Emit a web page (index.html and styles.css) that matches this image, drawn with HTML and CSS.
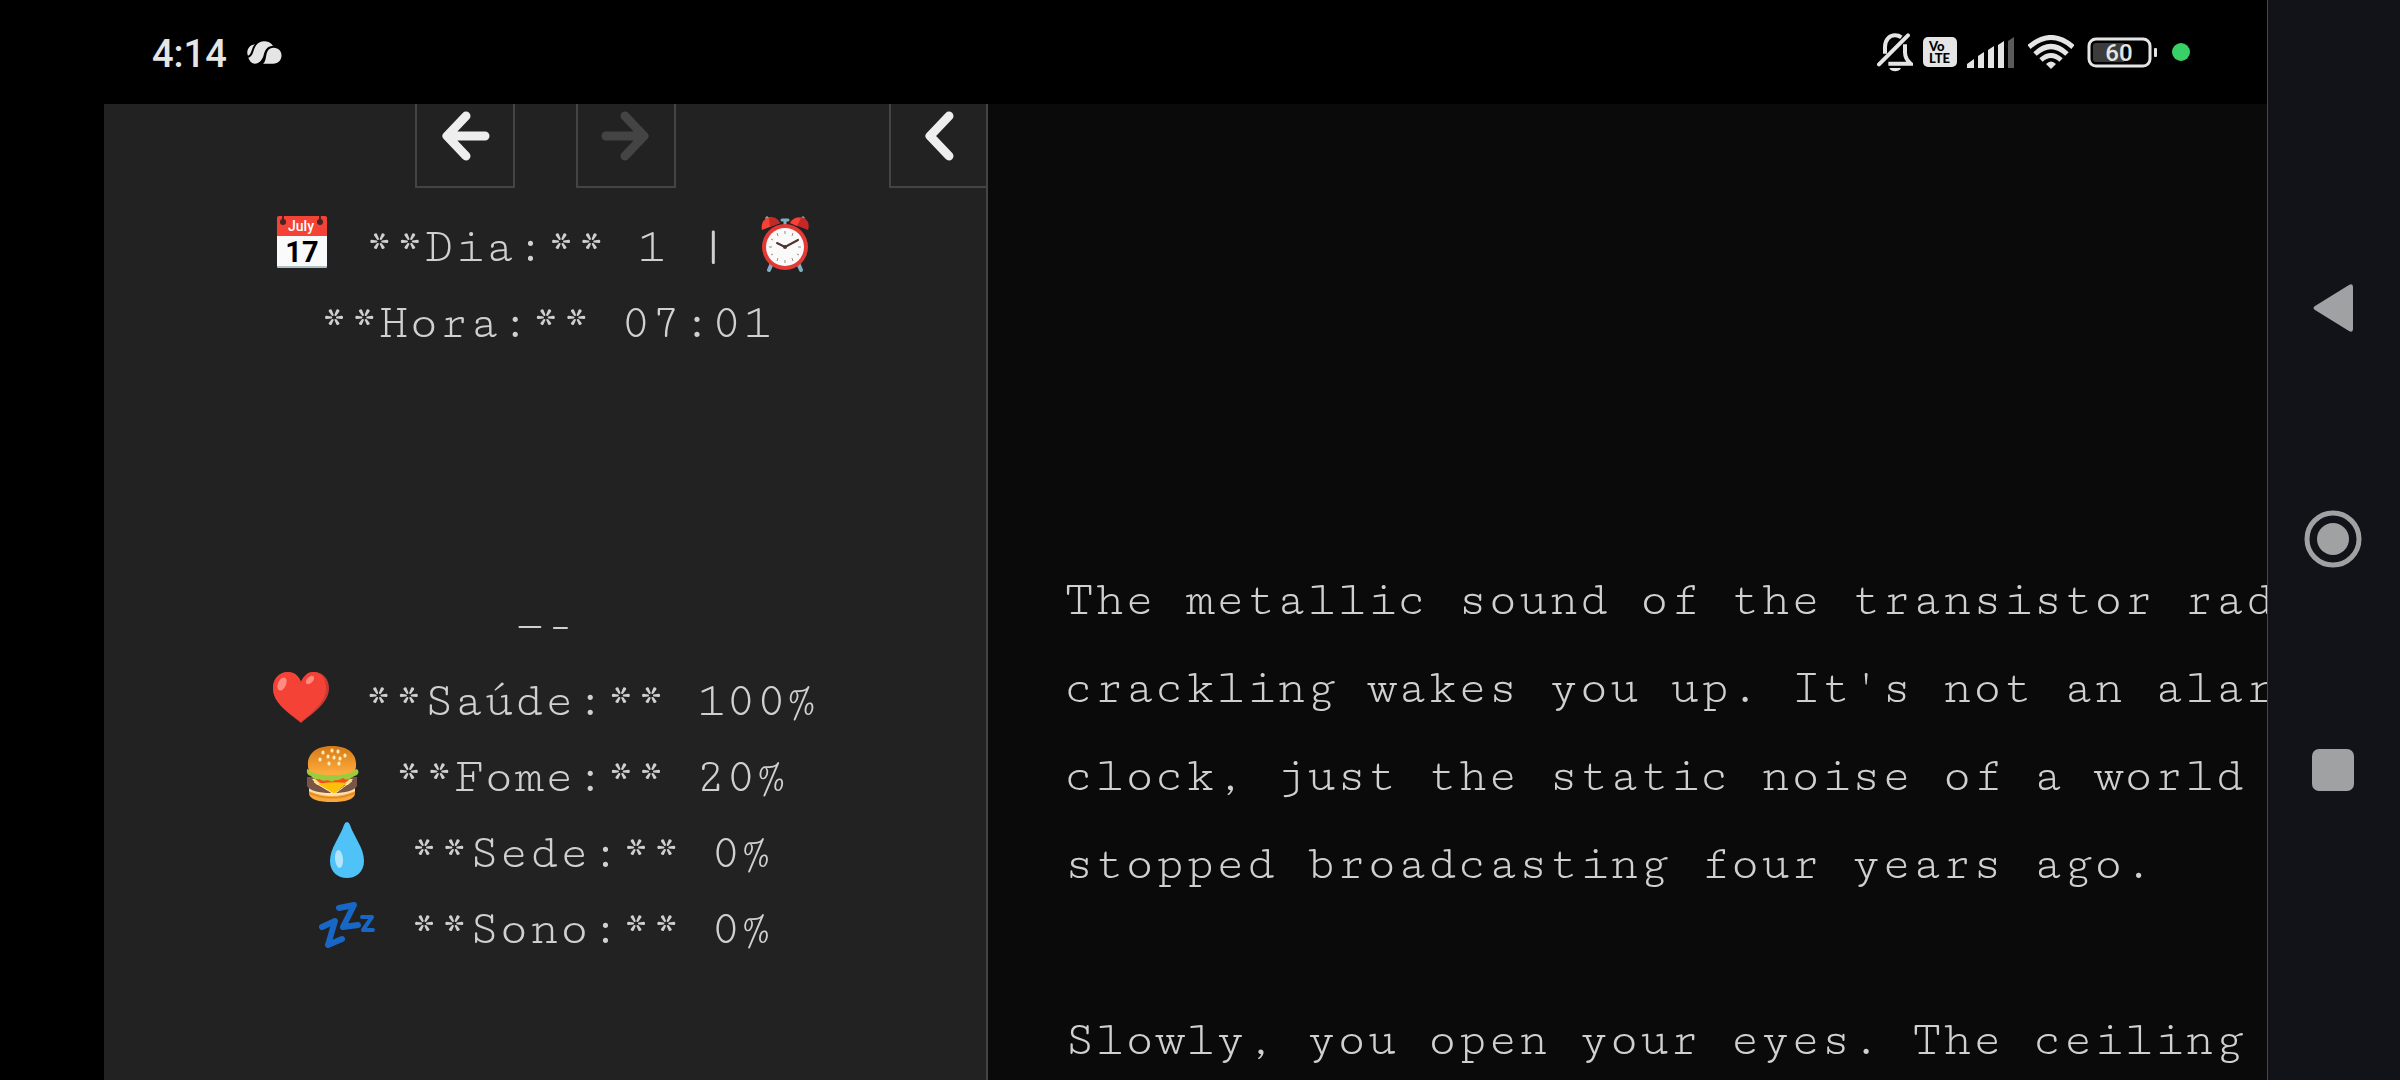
FILE: index.html
```html
<!DOCTYPE html>
<html lang="en">
    <head>
        <meta charset="utf-8">
        <title>Day 1</title>
        <link rel="stylesheet" href="styles.css">
    </head>
    <body>
        <div id="device">
            <header id="status-bar">
                <div class="status-group">
                    <span class="clock">4:14</span>
                    <svg class="cloud" width="35" height="23" viewBox="0 0 105 69" fill="#e5e5e5">
                        <path d="M24 10C8 12 0 24 1 38l2 6C14 42 12 22 24 10z"/>
                        <path d="M4 50C20 46 18 24 28 12 38-3 66-4 78 14 58 16 54 28 50 42 46 58 36 68 24 68 14 67 7 60 4 50z"/>
                        <path d="M48 68c10-6 8-28 14-38 8-14 28-12 36-2 12 14 4 40-20 40z"/>
                    </svg>
                </div>
                <div class="status-group status-icons">
                    <svg width="36" height="39" viewBox="0 0 108 117" fill="none" stroke="#e5e5e5" stroke-width="12">
                        <path d="M24 62V42C24 20 38 7 54 7c8 0 14 2 19 6M84 34v24c0 14 5 24 17 34H34"/>
                        <path d="M6 94L93 7" stroke-linecap="round"/>
                        <path d="M37 105h35c-5 13-30 13-35 0z" fill="#e5e5e5" stroke="none"/>
                    </svg>
                    <svg width="34" height="30" viewBox="0 0 34 30">
                        <rect width="34" height="30" rx="5" fill="#e5e5e5"/>
                        <text class="volte" x="6" y="14">Vo</text>
                        <text class="volte" x="6" y="26">LTE</text>
                    </svg>
                    <svg width="48" height="31" viewBox="0 0 48 31" fill="#e5e5e5">
                        <path d="M0 31v-4l7-5v9zM11 31V19l6-4v16zM21 31V13l6-4v22zM31 31V8l6-4v27z"/>
                        <path d="M41 31V4l6-4v31z" fill="#5b5b5b"/>
                    </svg>
                    <svg class="wifi" width="46" height="34" viewBox="0 0 46 34" fill="none" stroke="#e5e5e5" stroke-width="5">
                        <path d="M1 12Q23-7 45 12M7 19Q23 4 39 19M13 25q10-9 20 0"/>
                        <path d="M18 29q5-5 10 0l-5 5z" fill="#e5e5e5" stroke="none"/>
                    </svg>
                    <svg width="71" height="31" viewBox="0 0 71 31">
                        <rect x="2" y="2" width="61" height="27" rx="7" fill="none" stroke="#e5e5e5" stroke-width="3"/>
                        <path d="M9 6h28v19H9q-3 0-3-3V9q0-3 3-3z" fill="#3c3c3c"/>
                        <rect x="67" y="11" width="3" height="9" rx="1" fill="#e5e5e5"/>
                        <text class="battery" x="32" y="24">60</text>
                    </svg>
                    <span class="dot"></span>
                </div>
            </header>

            <div id="game">
                <aside id="sidebar">
                    <div id="history">
                        <div class="history-buttons">
                            <button class="tool" aria-label="Back">
                                <svg width="50" height="50" viewBox="0 0 50 50"><path d="M26 5L7 25l19 20M7 25h38"/></svg>
                            </button>
                            <button class="tool" aria-label="Forward" disabled>
                                <svg width="50" height="50" viewBox="0 0 50 50"><path d="M24 5l19 20-19 20M43 25H5"/></svg>
                            </button>
                        </div>
                        <button class="tool toggle" aria-label="Hide sidebar">
                            <svg width="50" height="50" viewBox="0 0 50 50"><path d="M35 5L16 25l19 20"/></svg>
                        </button>
                    </div>

                    <div id="stats">
                        <p>
                            <svg class="emoji" viewBox="0 0 56 56">
                                <rect x="3" y="1" width="50" height="51" rx="2" fill="#fafafa"/>
                                <path d="M5 0h46q2 0 2 2v18H3V2q0-2 2-2z" fill="#f44336"/>
                                <path d="M3 50v1q0 1 2 1h46q2 0 2-1v-1z" fill="#b0bec5"/>
                                <path d="M9 0v5M46 0v5" stroke="#5d1f1b" stroke-width="2"/>
                                <circle cx="9" cy="6" r="3" fill="#3e2723"/>
                                <circle cx="46" cy="6" r="3" fill="#3e2723"/>
                                <text class="month" x="27" y="15">July</text>
                                <text class="date" x="28" y="46">17</text>
                            </svg> **Dia:** 1 | <svg class="emoji" viewBox="0 0 56 56">
                                <path d="M15 47l-3 7M41 47l3 7" stroke="#82aec0" stroke-width="4" stroke-linecap="round"/>
                                <path d="M9 1l3 3M47 1l-3 3M28 3v8" stroke="#82aec0" stroke-width="3"/>
                                <path d="M25 4h6" stroke="#82aec0" stroke-width="3" stroke-linecap="round"/>
                                <path d="M5 14C3 5 10-1 18 2q4 2 5 5z" fill="#f44336"/>
                                <path d="M12 2q6-2 11 5l-10 4z" fill="#c62828"/>
                                <path d="M51 14C54 5 47-1 39 2q-5 2-6 5z" fill="#c62828"/>
                                <path d="M33 7q5-7 11-5l-4 8z" fill="#f44336"/>
                                <ellipse cx="28" cy="31" rx="23" ry="23" fill="#e53935"/>
                                <ellipse cx="28" cy="31" rx="19" ry="19" fill="#fafafa"/>
                                <path d="M28 15v3M28 44v3M12 31h3M41 31h3M20 17l1 3M36 17l-1 3M14 23l2 1M42 39l-2-1M42 23l-2 1M14 39l2-1M20 45l1-3M36 45l-1-3" stroke="#a1887f" stroke-width="1"/>
                                <path d="M20 27l8 4 13-7" fill="none" stroke="#4e342e" stroke-width="2" stroke-linecap="round"/>
                                <circle cx="28" cy="31" r="2" fill="#4e342e"/>
                            </svg> **Hora:** 07:01
                        </p>
                        <p class="rule">—-</p>
                        <p>
                            <svg class="emoji" viewBox="0 0 56 56">
                                <path d="M41 2C35 2 30 7 28 12 26 6 21 2 15 2 6 2 0 9 0 18c0 15 16 25 28 35 12-10 28-20 28-35C56 9 50 2 41 2z" fill="#c63a36"/>
                                <path d="M40 2C34 2 30 7 28 12 26 6 21 2 15 2 6 2 0 9 0 18c0 15 16 25 28 34 10-9 25-19 25-34C53 8 48 2 40 2z" fill="#f44336"/>
                                <ellipse cx="9" cy="14" rx="4" ry="7" fill="#ff8a80" transform="rotate(25 9 14)"/>
                                <ellipse cx="37" cy="10" rx="3" ry="5" fill="#ff8a80" transform="rotate(45 37 10)"/>
                            </svg> **Saúde:** 100%<br>
                            <svg class="emoji" viewBox="0 0 56 56">
                                <defs>
                                    <linearGradient id="bun" x2="0" y2="1">
                                        <stop offset="0" stop-color="#d67a16"/>
                                        <stop offset="1" stop-color="#ffad40"/>
                                    </linearGradient>
                                </defs>
                                <path d="M5 40h46v8q-2 8-23 8T5 48z" fill="#f9a93c"/>
                                <path d="M5 42q23 10 46 0v3q-23 10-46 0z" fill="#ffe0a8"/>
                                <path d="M5 46q23 10 46 0v2q-23 9-46 0z" fill="#e08a24"/>
                                <path d="M3 31h50v9q-4 7-25 7T3 40z" fill="#795548"/>
                                <path d="M8 33h41l-5 6H13z" fill="#ffe082"/>
                                <path d="M11 33q17-6 35 0l-5 4q-13 4-25 0z" fill="#f4511e"/>
                                <path d="M13 38q15-3 30-1L30 48z" fill="#ffc107"/>
                                <path d="M10 36l20 12 18-13" fill="none" stroke="#ffecb3" stroke-width="1"/>
                                <path d="M3 23q25 9 50 0 3 3 0 6-3 1-6 3-4 3-8 0-5 3-8 2-3 3-7 0-5 2-9-1-5 1-8-3-5-1-4-7z" fill="#9ccc3c"/>
                                <path d="M4 20C3 7 13 0 28 0s25 7 24 20q1 9-24 9T4 20z" fill="url(#bun)"/>
                                <path d="M19 6v1M28 4v1M34 5v1M41 9v1M16 13v1M24 10v1M30 11v1M36 12v1M25 17v1M35 17v1" stroke="#ffecb8" stroke-width="3" stroke-linecap="round"/>
                            </svg> **Fome:** 20%<br>
                            <svg class="emoji" viewBox="0 0 56 56">
                                <path d="M28 0q2 0 3 3c4 12 14 23 14 36 0 11-8 17-17 17s-17-6-17-17C11 26 21 15 25 3q1-3 3-3z" fill="#4fc3f7"/>
                                <ellipse cx="20" cy="37" rx="4" ry="9" fill="#b3e5fc" transform="rotate(-5 20 37)"/>
                            </svg> **Sede:** 0%<br>
                            <svg class="emoji" viewBox="0 0 56 56" fill="none" stroke="#1967c4" stroke-linecap="round" stroke-linejoin="round">
                                <path d="M3 29l13-6L9 47l14-6" stroke-width="6"/>
                                <path d="M20 10l15-3-11 22 15-2" stroke-width="6"/>
                                <path d="M43 19h10l-9 13h10" stroke-width="4"/>
                            </svg> **Sono:** 0%
                        </p>
                    </div>
                </aside>

                <main id="passage">
                    <p>The metallic sound of the transistor radio<br>
                    crackling wakes you up. It's not an alarm<br>
                    clock, just the static noise of a world<br>
                    stopped broadcasting four years ago.</p>
                    <p>Slowly, you open your eyes. The ceiling</p>
                </main>
            </div>
        </div>

        <nav id="system-nav">
            <button aria-label="System back">
                <svg width="58" height="58" viewBox="0 0 58 58"><path d="M11 27L45 6q4-2 4 2v42q0 4-4 2L11 31q-3-2 0-4z"/></svg>
            </button>
            <button aria-label="Home">
                <svg width="58" height="58" viewBox="0 0 58 58">
                    <circle cx="29" cy="29" r="26" fill="none" stroke="#a0a1a3" stroke-width="5"/>
                    <circle cx="29" cy="29" r="16"/>
                </svg>
            </button>
            <button aria-label="Recent apps">
                <svg width="58" height="58" viewBox="0 0 58 58"><rect x="8" y="8" width="42" height="42" rx="7"/></svg>
            </button>
        </nav>
    </body>
</html>
```
FILE: styles.css
```css
*{
    box-sizing: border-box;
}

body{
    display: flex;
    height: 100vh;
    margin: 0;
    overflow: hidden;
    background-color: #000;
    color: #d0d0d0;
    font-family: "Cutive Mono", "Liberation Mono", monospace;
    font-size: 50px;
}

button{
    margin: 0;
    padding: 0;
    border: 0;
    background: none;
}

svg{
    display: block;
}

p{
    margin: 0;
}

#device{
    flex: 1;
    min-width: 0;
    display: flex;
    flex-direction: column;
}

/* status bar */
#status-bar{
    display: flex;
    flex: none;
    justify-content: space-between;
    align-items: center;
    height: 104px;
    padding: 0 77px 0 152px;
    color: #e5e5e5;
    font-family: Roboto, sans-serif;
}

.status-group{
    display: flex;
    align-items: center;
    gap: 20px;
}

.status-icons{
    gap: 10px;
}

.clock{
    font-size: 38px;
    font-weight: 500;
    line-height: 44px;
    padding-top: 4px;
}

.wifi{
    margin: 0 3px;
}

.volte{
    fill: #000;
    font: 900 13px Lato, sans-serif;
}

.battery{
    fill: #e5e5e5;
    font: 500 24px Roboto, sans-serif;
    text-anchor: middle;
}

.dot{
    width: 18px;
    height: 18px;
    margin-left: 4px;
    border-radius: 50%;
    background-color: #38d167;
}

/* game */
#game{
    flex: 1;
    min-height: 0;
    display: flex;
    padding-left: 104px;
}

#sidebar{
    flex: 0 0 884px;
    overflow: hidden;
    background-color: #222;
    border-right: 2px solid #444;
}

#history{
    display: grid;
    grid-template-columns: 1fr auto 1fr;
}

.history-buttons{
    grid-column: 2;
    display: flex;
    gap: 61px;
}

.tool{
    width: 100px;
    height: 84px;
    padding: 7px 0 25px;
    border: 2px solid #444;
    border-top: 0;
}

.tool svg{
    margin: auto;
    fill: none;
    stroke: #eee;
    stroke-width: 9;
    stroke-linecap: round;
    stroke-linejoin: round;
}

.tool:disabled svg{
    stroke: #444;
}

.toggle{
    justify-self: end;
    width: 97px;
    border-right: 0;
}

#stats{
    padding: 22px 60px;
    line-height: 76px;
    text-align: center;
}

.rule{
    margin-top: 226px;
}

.emoji{
    display: inline-block;
    width: 56px;
    height: 56px;
    margin-right: 3px;
    vertical-align: -11px;
}

.month,
.date{
    font-family: Roboto, sans-serif;
    text-anchor: middle;
}

.month{
    fill: #fff;
    font-size: 14px;
    font-weight: 500;
}

.date{
    fill: #000;
    font-size: 29px;
    font-weight: 700;
}

#passage{
    flex: 1;
    min-width: 0;
    padding: 453px 0 0 76px;
    overflow: hidden;
    background-color: #0a0a0a;
    line-height: 88px;
    white-space: nowrap;
}

#passage p + p{
    margin-top: 88px;
}

/* navigation buttons of the phone */
#system-nav{
    flex: 0 0 133px;
    display: flex;
    flex-direction: column;
    align-items: center;
    justify-content: center;
    gap: 173px;
    padding: 0 2px 2px 0;
    background-color: #121318;
    border-left: 1px solid #45464f;
}

#system-nav svg{
    fill: #a0a1a3;
}
```
